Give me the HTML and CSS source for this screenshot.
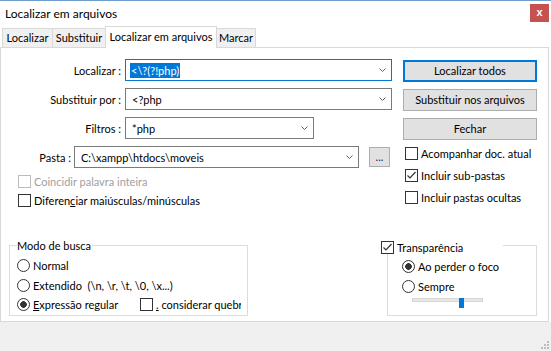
FILE: index.html
```html
<!DOCTYPE html>
<html>

<head>
    <title>Localizar em arquivos</title>
    <link rel="stylesheet" href="styles.css">
</head>

<body>
    <div class="window">
        <div class="titlebar">
            <span class="title">Localizar em arquivos</span>
            <div class="close">x</div>
        </div>

        <div class="tabs">
            <div class="tab tab-find">Localizar</div>
            <div class="tab tab-replace">Substituir</div>
            <div class="tab tab-files active">Localizar em arquivos</div>
            <div class="tab tab-mark">Marcar</div>
        </div>

        <div class="panel">
            <div class="top">
                <div class="form">
                    <div class="row">
                        <span class="label">Localizar :</span>
                        <div class="combo wide focus">
                            <span class="sel">&lt;\?(?!php)</span>
                            <svg class="arrow" width="7" height="4"><polyline points="0.5,0.5 3.5,3.5 6.5,0.5" /></svg>
                        </div>
                    </div>
                    <div class="row">
                        <span class="label">Substituir por :</span>
                        <div class="combo wide">
                            <span class="value">&lt;?php</span>
                            <svg class="arrow" width="7" height="4"><polyline points="0.5,0.5 3.5,3.5 6.5,0.5" /></svg>
                        </div>
                    </div>
                    <div class="row">
                        <span class="label">Filtros :</span>
                        <div class="combo mid">
                            <span class="value">*php</span>
                            <svg class="arrow" width="7" height="4"><polyline points="0.5,0.5 3.5,3.5 6.5,0.5" /></svg>
                        </div>
                    </div>
                    <div class="row">
                        <span class="label short">Pasta :</span>
                        <div class="combo path">
                            <span class="value">C:\xampp\htdocs\moveis</span>
                            <svg class="arrow" width="7" height="4"><polyline points="0.5,0.5 3.5,3.5 6.5,0.5" /></svg>
                        </div>
                        <div class="browse">...</div>
                    </div>

                    <div class="check left-check disabled">
                        <span class="box"></span>
                        <span class="text">Coincidir palavra inteira</span>
                    </div>
                    <div class="check left-check">
                        <span class="box"></span>
                        <span class="text">Diferen<u>c</u>iar maiúsculas/minúsculas</span>
                    </div>
                </div>

                <div class="actions">
                    <div class="btn default">Localizar todos</div>
                    <div class="btn">Substituir nos arquivos</div>
                    <div class="btn">Fechar</div>

                    <div class="check right-check first">
                        <span class="box"></span>
                        <span class="text">Acompanhar doc. atual</span>
                    </div>
                    <div class="check right-check">
                        <span class="box"><svg width="11" height="11"><polyline points="1.5,5.5 4,8 9.5,2" /></svg></span>
                        <span class="text">Incluir sub-pastas</span>
                    </div>
                    <div class="check right-check">
                        <span class="box"></span>
                        <span class="text">Incluir pastas ocultas</span>
                    </div>
                </div>
            </div>

            <div class="bottom">
                <fieldset class="group mode">
                    <legend>Modo de busca</legend>
                    <div class="opt">
                        <span class="radio"></span>
                        <span class="text">Normal</span>
                    </div>
                    <div class="opt">
                        <span class="radio"></span>
                        <span class="text">Extendido&nbsp;&nbsp;(\n, \r, \t, \0, \x...)</span>
                    </div>
                    <div class="opt">
                        <div class="opt-main">
                            <span class="radio on"></span>
                            <span class="text"><u>E</u>xpressão regular</span>
                        </div>
                        <div class="check clipped">
                            <span class="box"></span>
                            <span class="text"><u>.</u> considerar quebra</span>
                        </div>
                    </div>
                </fieldset>

                <fieldset class="group transp">
                    <legend>
                        <span class="box"><svg width="11" height="11"><polyline points="1.5,5.5 4,8 9.5,2" /></svg></span>
                        <span class="text">Transparência</span>
                    </legend>
                    <div class="opt">
                        <span class="radio on"></span>
                        <span class="text">Ao perder o foco</span>
                    </div>
                    <div class="opt">
                        <span class="radio"></span>
                        <span class="text">Sempre</span>
                    </div>
                    <div class="slider">
                        <div class="track"></div>
                        <div class="thumb"></div>
                    </div>
                </fieldset>
            </div>
        </div>

        <div class="footer">
            <!-- resize grip -->
            <svg class="grip" width="8" height="8">
                <rect x="6" y="0" width="2" height="2" />
                <rect x="3" y="3" width="2" height="2" />
                <rect x="6" y="3" width="2" height="2" />
                <rect x="0" y="6" width="2" height="2" />
                <rect x="3" y="6" width="2" height="2" />
                <rect x="6" y="6" width="2" height="2" />
            </svg>
        </div>
    </div>
</body>

</html>
```

FILE: styles.css
```css
body {
    margin: 0;
    font-family: Lato, "Noto Sans", sans-serif;
    font-size: 11px;
    color: #000;
}

.window {
    width: 551px;
    height: 351px;
    background-color: #fff;
    border-top: 1px solid #6f9fcf;
    box-sizing: border-box;
}

/* title bar */
.titlebar {
    height: 26px;
    display: flex;
    justify-content: space-between;
    align-items: flex-start;
}

.title {
    font-size: 12px;
    line-height: 14px;
    margin: 6px 0 0 5px;
}

.close {
    width: 19px;
    height: 18px;
    margin: 3px 2px 0 0;
    background-color: #c75050;
    color: #fff;
    font-family: "Liberation Sans", sans-serif;
    font-weight: bold;
    font-size: 11px;
    line-height: 16px;
    text-align: center;
}

/* tabs */
.tabs {
    height: 20px;
    display: flex;
    align-items: flex-end;
    padding-left: 2px;
}

.tab {
    height: 19px;
    box-sizing: border-box;
    border: 1px solid #d9d9d9;
    border-bottom: none;
    background-color: #f0f0f0;
    line-height: 18px;
    text-align: center;
    margin-left: -1px;
}

.tab:first-child {
    margin-left: 0;
}

.tab.active {
    height: 22px;
    margin-bottom: -1px;
    background-color: #fff;
    position: relative;
    z-index: 1;
    line-height: 19px;
}

.tab-find { width: 51px; }
.tab-replace { width: 54px; }
.tab-files { width: 112px; }
.tab-mark { width: 40px; }

.panel {
    width: 549px;
    height: 275px;
    box-sizing: border-box;
    border: 1px solid #d9d9d9;
    background-color: #fff;
}

.top {
    height: 191px;
    display: flex;
}

/* left form */
.form {
    width: 392px;
    padding-top: 11px;
}

.row {
    display: flex;
    align-items: center;
    height: 22px;
    margin-bottom: 7px;
}

.label {
    width: 120px;
    margin-right: 4px;
    text-align: right;
}

.label.short {
    width: 70px;
    margin-right: 3px;
}

.combo {
    height: 22px;
    box-sizing: border-box;
    border: 1px solid #7a7a7a;
    background-color: #fff;
    display: flex;
    align-items: center;
    justify-content: space-between;
    padding: 0 5px 0 4px;
}

.combo.focus {
    border-color: #0078d7;
}

.combo.wide { width: 267px; }
.combo.mid { width: 189px; }
.combo.path { width: 285px; }

.arrow polyline {
    fill: none;
    stroke: #606060;
    stroke-width: 1;
}

.sel {
    background-color: #0078d7;
    color: #fff;
    line-height: 15px;
    padding: 0 1px;
}

.value {
    padding-left: 2px;
}

.browse {
    width: 21px;
    height: 20px;
    margin-left: 10px;
    box-sizing: border-box;
    border: 1px solid #adadad;
    background-color: #e1e1e1;
    color: #1a1a6e;
    text-align: center;
    line-height: 18px;
}

/* checkboxes and radios */
.check {
    display: flex;
    align-items: center;
    height: 13px;
}

.check .text,
.opt .text {
    margin-left: 3px;
    line-height: 13px;
    white-space: nowrap;
}

.box {
    width: 13px;
    height: 13px;
    flex-shrink: 0;
    box-sizing: border-box;
    border: 1px solid #333;
    background-color: #fff;
}

.box svg {
    display: block;
}

.box polyline {
    fill: none;
    stroke: #333;
    stroke-width: 1.2;
}

.check.disabled .box {
    border-color: #bcbcbc;
}

.check.disabled .text {
    color: #a0a0a0;
}

.left-check {
    margin-left: 17px;
    margin-bottom: 6px;
}

.radio {
    width: 13px;
    height: 13px;
    flex-shrink: 0;
    box-sizing: border-box;
    border: 1px solid #333;
    border-radius: 50%;
    background-color: #fff;
}

.radio.on {
    background: radial-gradient(circle, #333 0, #333 3px, #fff 3.6px);
}

/* right buttons */
.actions {
    width: 134px;
    margin-left: 10px;
    padding-top: 12px;
}

.btn {
    height: 22px;
    margin-bottom: 7px;
    box-sizing: border-box;
    border: 1px solid #adadad;
    background-color: #e1e1e1;
    text-align: center;
    line-height: 20px;
}

.btn.default {
    border: 2px solid #0078d7;
    line-height: 18px;
}

.right-check {
    margin-left: 2px;
    margin-bottom: 9px;
}

.right-check.first {
    margin-top: 4px;
}

/* group boxes */
.bottom {
    display: flex;
    padding-left: 8px;
}

.group {
    margin: 0;
    height: 77px;
    box-sizing: border-box;
    border: 1px solid #dcdcdc;
    padding: 7px 0 0 7px;
    min-width: 0;
}

.group legend {
    height: 13px;
    line-height: 13px;
    padding: 0 1px 0 0;
}

.opt {
    display: flex;
    align-items: center;
    height: 13px;
    margin-bottom: 6.5px;
}

.opt-main {
    width: 123px;
    display: flex;
    align-items: center;
}

/* the dialog cuts this label off at the group edge */
.check.clipped {
    width: 101px;
    overflow: hidden;
}

.mode {
    width: 239px;
}

.transp {
    width: 150px;
    margin-left: 139px;
    padding: 8px 0 0 14px;
}

.transp legend {
    box-sizing: border-box;
    margin-left: -21px;
    padding-top: 2px;
    display: flex;
    align-items: flex-start;
    background-color: #fff;
}

.transp legend .text {
    width: 105px;
    margin-left: 3px;
}

.transp .opt {
    margin-bottom: 7px;
}

.slider {
    position: relative;
    width: 71px;
    height: 10px;
    margin: -2px 0 0 10px;
}

.track {
    height: 4px;
    margin-top: 3px;
    box-sizing: border-box;
    border: 1px solid #d6d6d6;
    background-color: #e7e7e7;
}

.thumb {
    position: absolute;
    left: 47px;
    top: 0;
    width: 5px;
    height: 10px;
    background-color: #0078d7;
}

.footer {
    height: 29px;
    background-color: #f0f0f0;
    position: relative;
}

.grip {
    position: absolute;
    right: 2px;
    bottom: 2px;
}

.grip rect {
    fill: #bcbcbc;
}
```
